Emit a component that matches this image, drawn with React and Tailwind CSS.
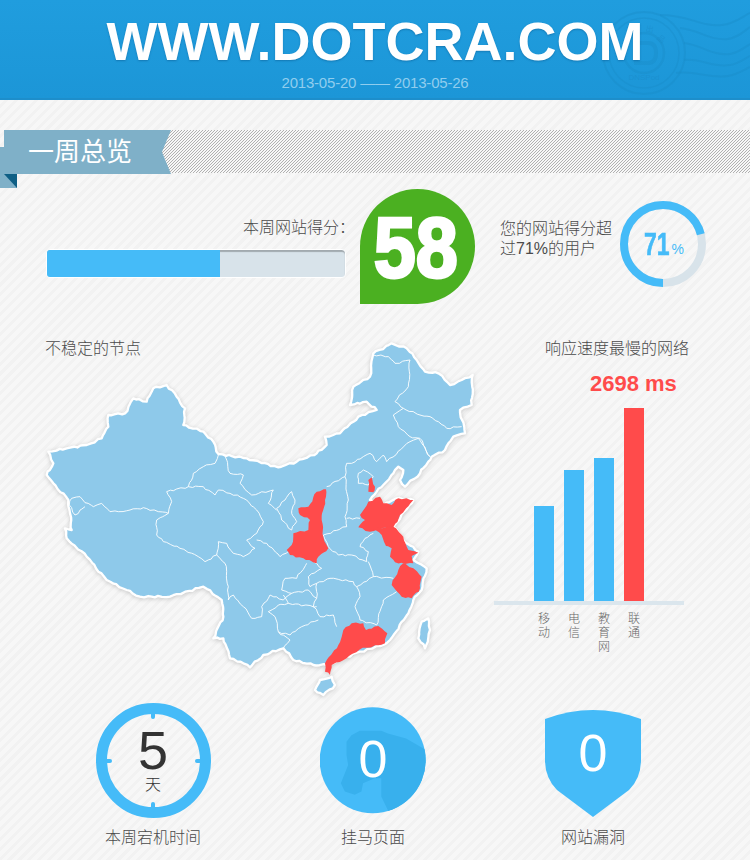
import React from 'react';

const fontClass = "font-['Liberation_Sans','Noto_Sans_CJK_SC',sans-serif]";

// map is traced in 3x coordinates, the svg viewBox scales it back down
const CHINA = [
  [55, 365], [110, 355], [170, 345], [215, 325], [235, 290], [235, 255], [285, 250], [310, 205], [350, 215], [370, 175],
  [410, 165], [440, 200], [465, 235], [460, 285], [520, 305], [550, 335], [565, 372], [650, 385], [745, 412], [800, 395],
  [860, 370], [890, 345], [885, 320], [930, 310], [985, 260], [1040, 240], [1010, 215], [960, 225], [970, 170], [1020, 140],
  [1030, 70], [1085, 40], [1130, 55], [1160, 90], [1185, 125], [1225, 130], [1260, 165], [1295, 150], [1328, 135], [1325, 225],
  [1290, 240], [1305, 310], [1270, 320], [1245, 360], [1205, 380], [1170, 430], [1125, 470], [1110, 450], [1120, 420], [1105, 410],
  [1060, 465], [1040, 485], [1020, 510], [1060, 525], [1100, 505], [1150, 510], [1090, 590], [1130, 640], [1165, 665], [1150, 690],
  [1190, 715], [1175, 780], [1150, 810], [1135, 850], [1080, 930], [1060, 945], [990, 965], [940, 985], [890, 1005], [850, 1005],
  [790, 990], [760, 955], [700, 975], [660, 1012], [640, 1000], [600, 985], [580, 925], [550, 925], [580, 860], [575, 810],
  [520, 770], [420, 800], [330, 800], [290, 780], [230, 750], [170, 680], [110, 625], [105, 595], [125, 600], [120, 550],
  [115, 510], [70, 460], [50, 435], [70, 400],
];

const ISLANDS = [
  [[1195, 865], [1175, 875], [1165, 925], [1185, 955], [1200, 900]],
  [[905, 1040], [870, 1050], [855, 1080], [880, 1095], [915, 1065]],
];

const BORDERS = [
  [[565, 375], [555, 400], [520, 410], [490, 430], [475, 470], [410, 485], [425, 515], [415, 550]],
  [[415, 550], [385, 545], [340, 533], [300, 540], [265, 545], [240, 545], [215, 520], [190, 530], [165, 518], [150, 500], [125, 505], [118, 525], [135, 555], [165, 530]],
  [[475, 470], [520, 470], [555, 495], [565, 480], [600, 490], [640, 505], [680, 540], [700, 575], [680, 610], [650, 630], [675, 655], [640, 680], [610, 670], [590, 640], [565, 635], [560, 675], [525, 695], [505, 680], [450, 655], [400, 635], [380, 615], [380, 570], [415, 550]],
  [[560, 675], [585, 700], [595, 770], [595, 810], [610, 795], [640, 830], [665, 865], [695, 860], [695, 830], [720, 795], [760, 810], [785, 790]],
  [[585, 378], [600, 430], [640, 435], [630, 460], [665, 495], [730, 480], [715, 520], [740, 540]],
  [[740, 535], [765, 510], [785, 485], [795, 510], [785, 550], [800, 575], [785, 600], [755, 570], [740, 535]],
  [[680, 630], [710, 640], [750, 680], [775, 665]],
  [[890, 470], [945, 440], [955, 510], [945, 560], [950, 590], [880, 615]],
  [[945, 440], [950, 400], [965, 400], [1020, 370], [1040, 395], [1060, 375], [1070, 395], [1140, 335], [1165, 325], [1200, 380]],
  [[950, 565], [990, 565]],
  [[985, 430], [1000, 420], [1030, 440], [1015, 465], [985, 460], [985, 430]],
  [[880, 615], [895, 650], [925, 675], [965, 675], [1010, 695], [1015, 665], [990, 650], [1005, 625], [1030, 610]],
  [[1015, 695], [1030, 740], [1090, 745]],
  [[850, 695], [875, 715], [835, 740], [840, 770], [860, 760], [900, 745], [970, 755], [980, 770], [1030, 740]],
  [[830, 700], [800, 745], [765, 745], [755, 780], [785, 790], [835, 780], [860, 805]],
  [[980, 770], [990, 800], [975, 830], [990, 870], [1040, 885], [1060, 810], [1100, 785]],
  [[860, 760], [860, 805], [850, 830], [870, 860], [910, 855], [920, 890]],
  [[715, 845], [745, 825], [775, 820], [760, 795]],
  [[775, 820], [860, 830]],
  [[715, 845], [735, 860], [745, 905], [780, 915], [815, 890], [865, 870]],
  [[745, 905], [780, 930], [760, 955]],
  [[1030, 75], [1075, 80], [1095, 100], [1140, 90], [1135, 170], [1095, 215], [1120, 235], [1090, 255], [1105, 290], [1140, 320]],
  [[1120, 235], [1170, 255], [1200, 260], [1225, 275], [1250, 295], [1295, 290]],
  [[1140, 320], [1170, 325], [1200, 380]],
];

const RED = [
  [[888, 478], [860, 485], [835, 530], [805, 535], [810, 555], [840, 570], [835, 600], [790, 610], [785, 645], [770, 660], [780, 675], [820, 685], [860, 700], [865, 680], [895, 655], [880, 620], [875, 570], [885, 510]],
  [[1025, 442], [1035, 470], [1030, 487], [1015, 485], [1015, 450]],
  [[1150, 510], [1105, 505], [1085, 525], [1060, 520], [1050, 500], [1015, 515], [990, 555], [1005, 570], [985, 592], [1020, 605], [1050, 595], [1090, 592], [1110, 555]],
  [[1025, 595], [1090, 590], [1120, 620], [1135, 660], [1165, 668], [1145, 678], [1150, 700], [1125, 702], [1095, 697], [1080, 680], [1085, 655], [1068, 648], [1055, 615]],
  [[1120, 700], [1150, 715], [1175, 740], [1170, 775], [1145, 805], [1115, 800], [1085, 765], [1105, 720]],
  [[1000, 880], [965, 880], [940, 900], [925, 945], [885, 1000], [885, 1025], [900, 1035], [905, 1005], [950, 985], [990, 958], [1065, 940], [1072, 910], [1045, 888], [1008, 900]],
];

// break long edges into small bumps so the borders look hand drawn like the map image
const rough = (points, closed) => {
  const out = [];
  const last = closed ? points.length : points.length - 1;
  for (let i = 0; i < last; i++) {
    const [x1, y1] = points[i];
    const [x2, y2] = points[(i + 1) % points.length];
    const steps = Math.max(1, Math.round(Math.hypot(x2 - x1, y2 - y1) / 11));
    for (let s = 0; s < steps; s++) {
      const t = s / steps;
      const wobble = s === 0 ? 0 : 2.4;
      out.push([
        x1 + (x2 - x1) * t + Math.sin(x1 * 12.9 + s * 7.3) * wobble,
        y1 + (y2 - y1) * t + Math.sin(y1 * 78.2 + s * 4.1) * wobble,
      ]);
    }
  }
  if (!closed) out.push(points[points.length - 1]);
  return 'M' + out.map((p) => `${p[0].toFixed(1)} ${p[1].toFixed(1)}`).join('L') + (closed ? 'Z' : '');
};

const BARS = [
  { name: '移动', height: 'h-[95px]', color: 'bg-[#45bbf8]' },
  { name: '电信', height: 'h-[131px]', color: 'bg-[#45bbf8]' },
  { name: '教育网', height: 'h-[143px]', color: 'bg-[#45bbf8]' },
  { name: '联通', height: 'h-[193px]', color: 'bg-[#ff4b4b]' },
];

const Stamp = () => (
  <svg className="absolute left-[590px] top-0" width="160" height="98" viewBox="0 0 160 98" fill="none" stroke="#1a8bc9" strokeOpacity="0.4">
    <circle cx="54" cy="53" r="41" strokeWidth="2" />
    <circle cx="54" cy="53" r="35" strokeWidth="1.5" />
    <circle cx="54" cy="53" r="20" strokeWidth="2.5" />
    <path d="M46 43h12q8 0 8 10t-8 10H46z" strokeWidth="4" />
    <path d="M70 15c30 0 40 12 62 10 12-1 20-8 28-12M90 28c20 2 30 13 48 11 10-1 16-8 22-12M94 43c18 2 28 13 46 11 8-1 14-6 20-10M94 60c18-2 28 8 46 5 8-1 14-6 20-9M86 73c20-3 32 6 52 3 8-1 16-6 22-9" strokeWidth="2" />
    <g fill="#1a8bc9" fillOpacity="0.55" stroke="none" fontFamily="Liberation Sans, Noto Sans CJK SC" textAnchor="middle">
      <text x="54" y="80" fontSize="8">DNSPod</text>
      <text x="60" y="32" fontSize="8" transform="rotate(10 60 28)">出</text>
      <text x="72" y="42" fontSize="8" transform="rotate(40 72 38)">品</text>
    </g>
  </svg>
);

const ChinaMap = () => (
  <svg className="col-start-1 row-start-1 drop-shadow-[0_1px_2px_rgba(0,0,0,0.18)]" width="460" height="370" viewBox="0 0 1380 1110">
    <path d={rough(CHINA, true)} fill="#8ec9ea" stroke="#fff" strokeWidth="7" strokeLinejoin="round" />
    {ISLANDS.map((p, i) => (
      <path key={i} d={rough(p, true)} fill="#8ec9ea" stroke="#fff" strokeWidth="7" strokeLinejoin="round" />
    ))}
    {BORDERS.map((p, i) => (
      <path key={i} d={rough(p, false)} fill="none" stroke="#fff" strokeWidth="3" strokeOpacity="0.9" />
    ))}
    {RED.map((p, i) => (
      <path key={i} d={rough(p, true)} fill="#ff4b4b" />
    ))}
  </svg>
);

const Caption = ({ children }) => (
  <div className="mt-2 text-center text-base leading-6 font-light text-[#4a4a4a]">{children}</div>
);

export default function App() {
  return (
    <div className={`w-[750px] h-[860px] overflow-hidden bg-[repeating-linear-gradient(135deg,#f7f7f7_0,#f7f7f7_4px,#f2f2f2_4px,#f2f2f2_7px)] ${fontClass}`}>
      <header className="relative h-[100px] border-b-2 border-[#1d8ecb] bg-gradient-to-b from-[#209dde] to-[#1c96d7] text-center">
        <Stamp />
        <h1 className="relative pt-[10px] text-[54px] leading-[62px] font-bold text-white [text-shadow:0_1px_2px_rgba(0,60,110,0.35)]">
          WWW.DOTCRA.COM
        </h1>
        <p className="relative mt-[1px] text-[15px] leading-5 tracking-[-0.2px] text-[#90cdee]">2013-05-20 —— 2013-05-26</p>
      </header>

      <section className="relative mt-[30px] flex h-[44px]">
        <div className="absolute left-0 top-[17px] h-[41px] w-[17px] bg-[#7fb0c8]">
          <div className="mt-[27px] ml-[4px] h-[14px] w-[13px] bg-[#0f5f85] [clip-path:polygon(0_0,100%_0,100%_100%)]" />
        </div>
        <div className="absolute left-[161px] right-0 top-0 h-[43px] bg-[repeating-linear-gradient(135deg,#b0b0b0_0,#b0b0b0_0.7px,#f7f7f7_0.7px,#f7f7f7_2.12px)]" />
        <div className="relative ml-[4px] h-[44px] w-[167px] bg-[#7fb0c8] pl-[24px] text-[26px] leading-[44px] text-white [clip-path:polygon(0_0,100%_0,94.6%_50%,100%_100%,0_100%)]">
          一周总览
        </div>
      </section>

      <section className="mt-[15px] flex h-[115px] pl-[46px]">
        <div className="w-[300px] pt-[27px]">
          <div className="-mr-[9px] text-right text-base leading-6 font-light text-[#4a4a4a]">本周网站得分：</div>
          <div className="mt-[9px] flex h-[29px] overflow-hidden rounded border border-white bg-[#d8e3ea] shadow-[inset_0_2px_1px_rgba(0,0,0,0.25)]">
            <div className="w-[173px] bg-[#45bbf8]" />
          </div>
        </div>
        <div className="ml-[14px] flex h-[115px] w-[115px] items-center justify-center rounded-full rounded-bl-none bg-[#4bb021] pr-[3px] pt-[2px]">
          <span className="inline-block scale-x-[0.88] text-[86px] leading-[113px] font-bold text-white [-webkit-text-stroke:3px_white]">58</span>
        </div>
        <div className="ml-[25px] w-[120px] pt-[30px] text-base leading-5 font-light text-[#4a4a4a]">您的网站得分超过71%的用户</div>
        <div className="relative mt-[12px] h-[86px] w-[86px]">
          <svg width="86" height="86" viewBox="0 0 86 86" fill="none" strokeWidth="8">
            <circle cx="43" cy="43" r="39" stroke="#d8e3ea" />
            <circle cx="43" cy="43" r="39" stroke="#45bbf8" pathLength="100" strokeDasharray="71 29" transform="rotate(90 43 43)" />
          </svg>
          <div className="absolute inset-0 flex items-center justify-center pr-[3px] text-[#45bbf8]">
            <span className="inline-block scale-x-[0.72] text-[32px] leading-none font-bold [-webkit-text-stroke:0.6px_#45bbf8]">71</span>
            <span className="mt-[9px] -ml-[3px] text-sm leading-none font-light">%</span>
          </div>
        </div>
      </section>

      <section className="mt-[26px] flex h-[370px] pl-[30px]">
        <div className="grid w-[464px] grid-cols-1">
          <div className="col-start-1 row-start-1 pl-[15px] pt-[7px] text-base leading-6 font-light text-[#4a4a4a]">不稳定的节点</div>
          <ChinaMap />
        </div>
        <div className="w-[190px] pt-[7px]">
          <div className="pl-[51px] text-base leading-6 whitespace-nowrap font-light text-[#4a4a4a]">响应速度最慢的网络</div>
          <div className="mt-[11px] pl-[96px] text-[22px] leading-6 font-bold whitespace-nowrap text-[#ff4b4b]">2698 ms</div>
          <div className="mt-[12px] flex h-[193px] items-end gap-[10px] pl-[40px]">
            {BARS.map((b) => (
              <div key={b.name} className={`w-5 ${b.height} ${b.color}`} />
            ))}
          </div>
          <div className="h-1 bg-[#dbe6ed]" />
          <div className="mt-[7px] flex gap-[10px] pl-[40px]">
            {BARS.map((b) => (
              <div key={b.name} className="w-5 px-1 text-center text-xs leading-[14px] font-light text-[#666]">{b.name}</div>
            ))}
          </div>
        </div>
      </section>

      <section className="mt-[3px] grid w-[660px] ml-[43px] grid-cols-3">
        <div>
          <div className="flex h-[115px] justify-center">
            <div className="relative flex h-[115px] w-[115px] flex-col items-center rounded-full border-[11px] border-[#45bbf8]">
              <span className="absolute left-1/2 top-0 h-[5px] w-[4px] -translate-x-1/2 rounded-b-full bg-[#45bbf8]" />
              <span className="absolute left-1/2 bottom-0 h-[5px] w-[4px] -translate-x-1/2 rounded-t-full bg-[#45bbf8]" />
              <span className="absolute top-1/2 left-0 h-[4px] w-[5px] -translate-y-1/2 rounded-r-full bg-[#45bbf8]" />
              <span className="absolute top-1/2 right-0 h-[4px] w-[5px] -translate-y-1/2 rounded-l-full bg-[#45bbf8]" />
              <span className="mt-[11px] text-[54px] leading-[50px] font-light text-[#333]">5</span>
              <span className="text-base leading-5 font-light text-[#333]">天</span>
            </div>
          </div>
          <Caption>本周宕机时间</Caption>
        </div>
        <div>
          <div className="flex h-[115px] items-center justify-center">
            <div className="grid h-[107px] w-[107px] place-items-center">
              <svg className="col-start-1 row-start-1" width="107" height="107" viewBox="30 20 323 323">
                <clipPath id="malware-clip"><circle cx="189" cy="181" r="160" /></clipPath>
                <circle cx="189" cy="181" r="160" fill="#45bbf8" />
                <path clipPath="url(#malware-clip)" fill="#38b0ed" d="M110 125L125 105L150 92L215 92L235 100L290 115L350 150L360 260L300 320L238 338L215 290L215 235L195 235L160 250L155 275L135 285L105 275L93 250L115 195L110 165Z" />
              </svg>
              <span className="col-start-1 row-start-1 -mt-[3px] text-[52px] leading-none font-light text-white">0</span>
            </div>
          </div>
          <Caption>挂马页面</Caption>
        </div>
        <div>
          <div className="flex h-[115px] items-center justify-center pt-[6px]">
            <div className="grid h-[107px] w-[96px] place-items-center">
              <svg className="col-start-1 row-start-1" width="96" height="107" viewBox="0 0 96 107">
                <path d="M0 9Q48 -9 96 9V50Q96 68 84 80L48 107L12 80Q0 68 0 50Z" fill="#45bbf8" />
              </svg>
              <span className="col-start-1 row-start-1 -mt-[22px] text-[52px] leading-none font-light text-white">0</span>
            </div>
          </div>
          <Caption>网站漏洞</Caption>
        </div>
      </section>
    </div>
  );
}
